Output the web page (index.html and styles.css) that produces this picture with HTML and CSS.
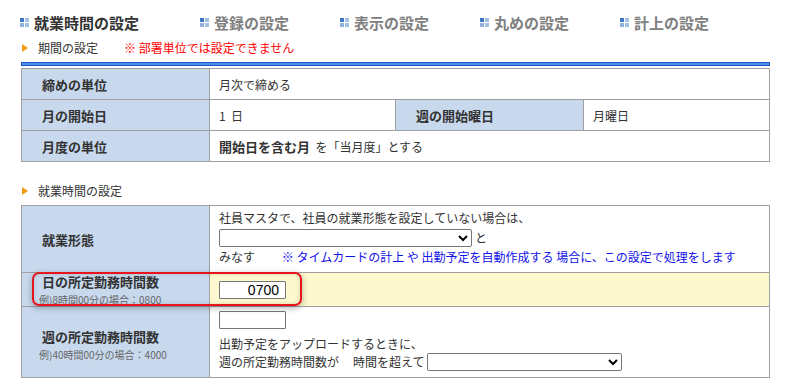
FILE: index.html
```html
<!DOCTYPE html>
<html lang="ja">
<head>
    <meta charset="UTF-8">
    <meta name="viewport" content="width=device-width, initial-scale=1.0">
    <title>就業時間の設定</title>
    <link rel="stylesheet" href="styles.css">
</head>
<body>
    <div class="page">
        <!-- Tabs -->
        <div class="tabs">
            <div class="tab tab-first active">
                <svg class="tab-icon" width="9" height="9" viewBox="0 0 9 9"><rect x="0" y="0" width="4" height="4" fill="#3d79c0"/><rect x="5" y="0" width="4" height="4" fill="#a4c0e2"/><rect x="0" y="5" width="4" height="4" fill="#8fb1db"/><rect x="5" y="5" width="4" height="4" fill="#a4c0e2"/></svg>
                就業時間の設定
            </div>
            <div class="tab">
                <svg class="tab-icon" width="9" height="9" viewBox="0 0 9 9"><rect x="0" y="0" width="4" height="4" fill="#3d79c0"/><rect x="5" y="0" width="4" height="4" fill="#a4c0e2"/><rect x="0" y="5" width="4" height="4" fill="#8fb1db"/><rect x="5" y="5" width="4" height="4" fill="#a4c0e2"/></svg>
                登録の設定
            </div>
            <div class="tab">
                <svg class="tab-icon" width="9" height="9" viewBox="0 0 9 9"><rect x="0" y="0" width="4" height="4" fill="#3d79c0"/><rect x="5" y="0" width="4" height="4" fill="#a4c0e2"/><rect x="0" y="5" width="4" height="4" fill="#8fb1db"/><rect x="5" y="5" width="4" height="4" fill="#a4c0e2"/></svg>
                表示の設定
            </div>
            <div class="tab">
                <svg class="tab-icon" width="9" height="9" viewBox="0 0 9 9"><rect x="0" y="0" width="4" height="4" fill="#3d79c0"/><rect x="5" y="0" width="4" height="4" fill="#a4c0e2"/><rect x="0" y="5" width="4" height="4" fill="#8fb1db"/><rect x="5" y="5" width="4" height="4" fill="#a4c0e2"/></svg>
                丸めの設定
            </div>
            <div class="tab">
                <svg class="tab-icon" width="9" height="9" viewBox="0 0 9 9"><rect x="0" y="0" width="4" height="4" fill="#3d79c0"/><rect x="5" y="0" width="4" height="4" fill="#a4c0e2"/><rect x="0" y="5" width="4" height="4" fill="#8fb1db"/><rect x="5" y="5" width="4" height="4" fill="#a4c0e2"/></svg>
                計上の設定
            </div>
        </div>

        <!-- 期間の設定 -->
        <div class="section-title first">
            <span class="arrow"></span>
            期間の設定
            <span class="notice">※ 部署単位では設定できません</span>
        </div>
        <div class="blue-bar"></div>

        <table class="settings period">
            <colgroup>
                <col class="col-label">
                <col>
                <col class="col-label">
                <col>
            </colgroup>
            <tr>
                <th>締めの単位</th>
                <td colspan="3">月次で締める</td>
            </tr>
            <tr>
                <th>月の開始日</th>
                <td>1&nbsp; 日</td>
                <th>週の開始曜日</th>
                <td>月曜日</td>
            </tr>
            <tr>
                <th>月度の単位</th>
                <td colspan="3"><strong>開始日を含む月</strong>&nbsp; を「当月度」とする</td>
            </tr>
        </table>

        <!-- 就業時間の設定 -->
        <div class="section-title second">
            <span class="arrow"></span>
            就業時間の設定
        </div>

        <div class="table-wrap">
            <table class="settings work">
                <colgroup>
                    <col class="col-label">
                    <col>
                </colgroup>
                <tr class="row-type">
                    <th>就業形態</th>
                    <td class="top">
                        <div class="line">社員マスタで、社員の就業形態を設定していない場合は、</div>
                        <div class="line select-line">
                            <select class="type-select"></select> と
                        </div>
                        <div class="line">みなす <span class="info">※ タイムカードの計上 や 出勤予定を自動作成する 場合に、この設定で処理をします</span></div>
                    </td>
                </tr>
                <tr class="row-day">
                    <th>
                        <div class="label-main">日の所定勤務時間数</div>
                        <div class="label-sub">例)8時間00分の場合：0800</div>
                    </th>
                    <td class="highlight"><input type="text" class="hours" value="0700"></td>
                </tr>
                <tr class="row-week">
                    <th>
                        <div class="label-main">週の所定勤務時間数</div>
                        <div class="label-sub">例)40時間00分の場合：4000</div>
                    </th>
                    <td class="top">
                        <input type="text" class="hours" value="">
                        <div class="line upload-line">出勤予定をアップロードするときに、</div>
                        <div class="line select-line">
                            週の所定勤務時間数が<span class="gap"></span>時間を超えて <select class="over-select"></select>
                        </div>
                    </td>
                </tr>
            </table>
            <!-- highlight frame over the daily hours row -->
            <div class="focus-frame"></div>
        </div>
    </div>
</body>
</html>
```

FILE: styles.css
```css
/* General Styles */
body {
    margin: 0;
    padding: 0;
    background-color: #fff;
    font-family: "Noto Sans CJK JP", "Liberation Sans", sans-serif;
    font-size: 12px;
    color: #333;
}

.page {
    width: 749px;
    padding: 0 0 0 21px;
}

/* Tabs */
.tabs {
    display: flex;
    padding-top: 13px;
    margin-left: -1px;
}

.tab {
    display: flex;
    align-items: center;
    gap: 5px;
    width: 140px;
    height: 18px;
    font-size: 15px;
    font-weight: bold;
    color: #808080;
    white-space: nowrap;
}

.tab-first {
    width: 180px;
}

.tab.active {
    color: #333;
}

.tab-icon {
    flex: none;
}

/* Section titles */
.section-title {
    display: flex;
    align-items: center;
    height: 16px;
    line-height: 16px;
    font-size: 12px;
    color: #333;
}

.section-title.first {
    margin-top: 9px;
}

.section-title.second {
    margin-top: 21px;
    margin-bottom: 6px;
}

.arrow {
    width: 0;
    height: 0;
    margin: 0 10px 0 1px;
    border-top: 4px solid transparent;
    border-bottom: 4px solid transparent;
    border-left: 6px solid #f39c12;
}

.notice {
    margin-left: 26px;
    color: #f00;
}

.blue-bar {
    height: 2px;
    margin-top: 6px;
    margin-bottom: 2px;
    border: 1px solid #1c56c9;
    background-color: #4c90ea;
}

/* Tables */
.settings {
    width: 749px;
    table-layout: fixed;
    border-collapse: collapse;
}

.col-label {
    width: 188px;
}

.settings th,
.settings td {
    border: 1px solid #a0a0a0;
    padding: 0 9px;
    text-align: left;
    vertical-align: middle;
}

.settings th {
    padding-left: 20px;
    background-color: #c8d9ee;
    font-size: 13px;
    font-weight: bold;
    color: #333;
}

.settings td {
    background-color: #fff;
    color: #333;
}

.period th,
.period td {
    height: 30px;
}

.settings strong {
    font-size: 13px;
}

.table-wrap {
    position: relative;
}

.settings td.top {
    vertical-align: top;
}

.row-type td {
    height: 62px;
    padding-top: 4px;
}

.row-day th,
.row-day td {
    height: 33px;
}

.row-week th {
    padding-top: 5px;
}

.row-week td {
    height: 66px;
    padding-top: 4px;
}

.line {
    height: 16px;
    line-height: 16px;
    white-space: nowrap;
}

.select-line {
    display: flex;
    align-items: center;
    height: 18px;
    margin: 3px 0 2px;
}

.upload-line {
    margin-top: 7px;
}

.row-week .select-line {
    margin-top: 1px;
}

.info {
    margin-left: 24px;
    color: #1010e8;
}

.gap {
    display: inline-block;
    width: 14px;
}

.label-main {
    line-height: 18px;
}

.label-sub {
    margin-top: 2px;
    margin-left: -3px;
    font-size: 10px;
    font-weight: normal;
    line-height: 13px;
    color: #666;
}

td.highlight {
    background-color: #fdf8cd;
}

select {
    height: 18px;
    padding: 0;
    border: 1px solid #767676;
    border-radius: 2px;
    background-color: #fff;
    font-size: 12px;
}

.type-select {
    width: 253px;
    margin-right: 3px;
}

.over-select {
    width: 195px;
    margin-left: 3px;
}

input.hours {
    display: block;
    box-sizing: border-box;
    width: 67px;
    height: 18px;
    padding: 0 6px;
    border: 1px solid #767676;
    border-radius: 1px;
    font-family: "Liberation Sans", Arial, sans-serif;
    font-size: 14px;
    text-align: right;
    color: #000;
}

.focus-frame {
    position: absolute;
    left: 11px;
    top: 67px;
    width: 266px;
    height: 30px;
    border: 2px solid #e8141c;
    border-radius: 7px;
    box-shadow: 0 2px 6px rgba(0, 0, 0, 0.3), inset 0 0 4px rgba(0, 0, 0, 0.15);
    pointer-events: none;
}
```
